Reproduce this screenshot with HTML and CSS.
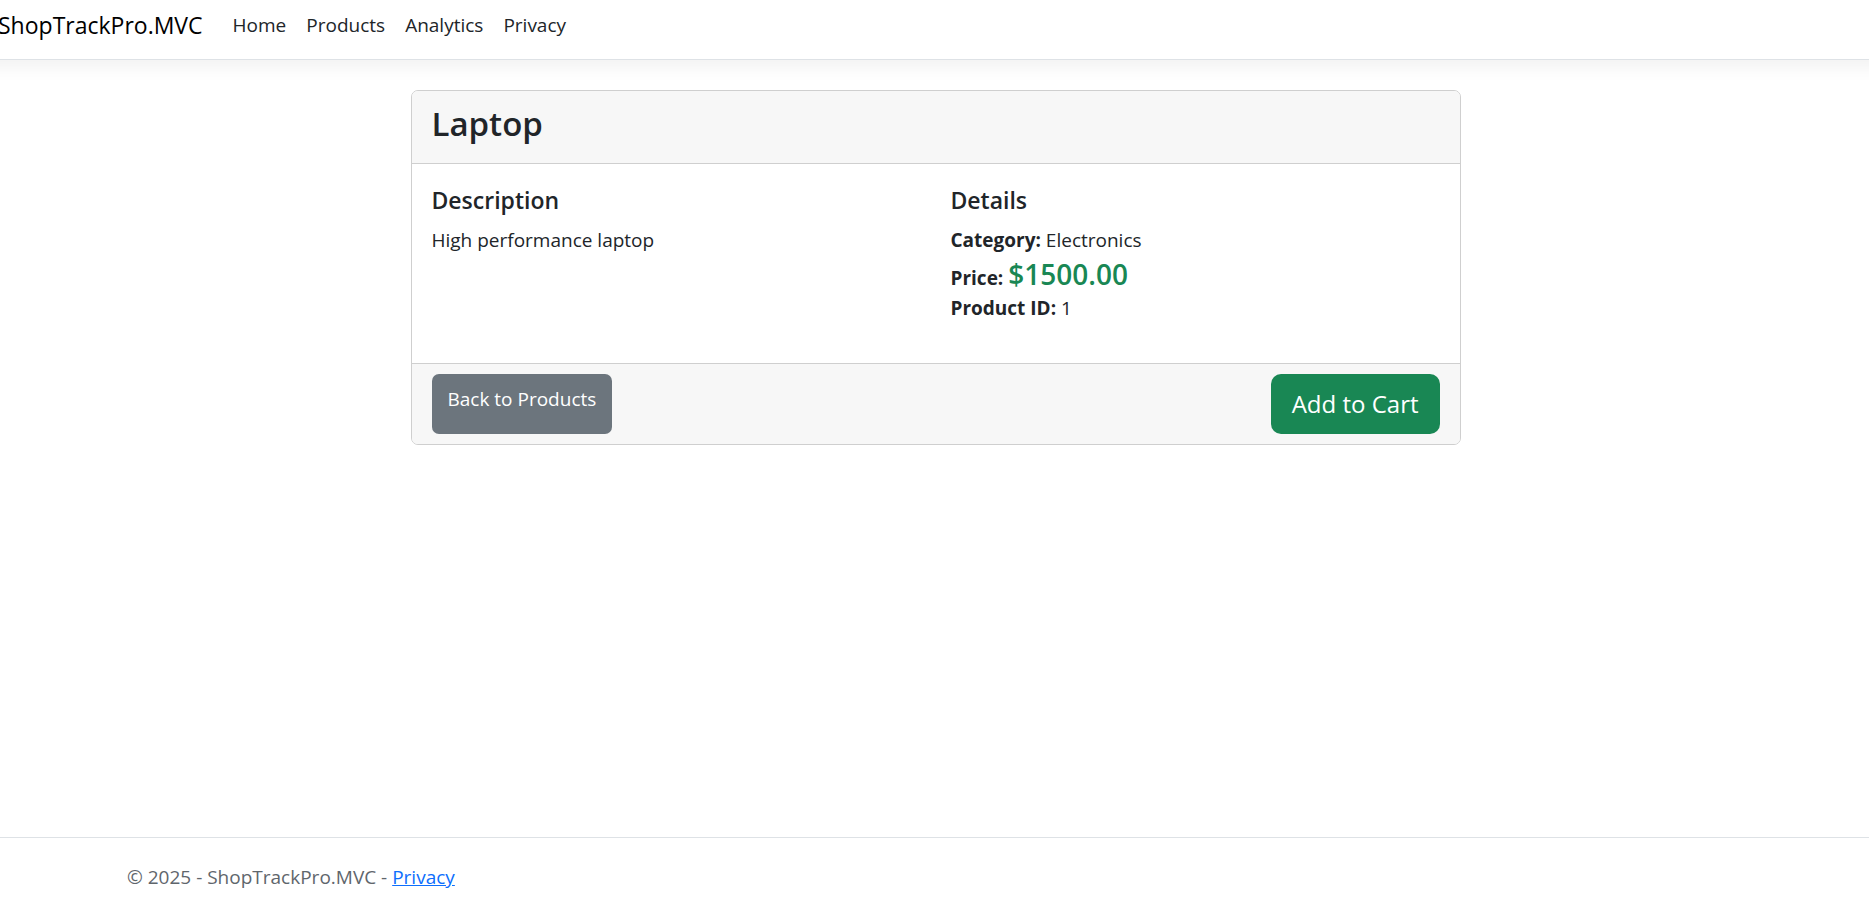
FILE: index.html
```
<!DOCTYPE html>
<html lang="en">
<head>
<meta charset="utf-8">
<meta name="viewport" content="width=device-width, initial-scale=1">
<title>Laptop - ShopTrackPro.MVC</title>
<link rel="stylesheet" href="styles.css">
</head>
<body>
<header class="site-header">
  <nav class="navbar">
    <a class="navbar-brand" href="#">ShopTrackPro.MVC</a>
    <ul class="nav-list">
      <li><a class="nav-link" href="#">Home</a></li>
      <li><a class="nav-link" href="#">Products</a></li>
      <li><a class="nav-link" href="#">Analytics</a></li>
      <li><a class="nav-link" href="#">Privacy</a></li>
    </ul>
  </nav>
</header>
<main class="content">
  <article class="card">
    <div class="card-header"><h2 class="card-title">Laptop</h2></div>
    <div class="card-body">
      <section>
        <h5 class="section-title">Description</h5>
        <p class="text">High performance laptop</p>
      </section>
      <section>
        <h5 class="section-title">Details</h5>
        <p class="text"><strong>Category:</strong> Electronics</p>
        <p class="text price-row"><strong>Price:</strong> <span class="price">$1500.00</span></p>
        <p class="text"><strong>Product ID:</strong> 1</p>
      </section>
    </div>
    <div class="card-footer">
      <a class="btn btn-secondary" href="#">Back to Products</a>
      <button class="btn btn-success" type="submit">Add to Cart</button>
    </div>
  </article>
</main>
<footer class="site-footer">
  <p class="copyright">&copy; 2025 - ShopTrackPro.MVC - <a class="footer-link" href="#">Privacy</a></p>
</footer>
</body>
</html>
```
FILE: styles.css
```
* {
  box-sizing: border-box;
}

body {
  margin: 0;
  min-height: 100vh;
  display: flex;
  flex-direction: column;
  overflow-x: hidden;
  background: #fff;
  color: #212529;
  font-family: "Segoe UI", "Open Sans", "Noto Sans", sans-serif;
  font-size: 19px;
  line-height: 30px;
}

.site-header {
  margin: 0 -20px;
  padding: 0 20px;
  border-bottom: 1px solid #dee2e6;
  box-shadow: 0 8px 16px rgba(0, 0, 0, 0.05);
}

.navbar {
  display: flex;
  align-items: center;
  gap: 30px;
  margin-left: -2px;
  padding: 6px 0 15px;
}

.navbar-brand {
  color: #000;
  font-size: 23px;
  line-height: 38px;
  text-decoration: none;
}

.nav-list {
  display: flex;
  gap: 20px;
  margin: 0;
  padding: 0;
  list-style: none;
}

.nav-link {
  color: #212529;
  text-decoration: none;
}

.content {
  flex: 1;
  padding: 30px 0 30px 2px;
}

.card {
  max-width: 1050px;
  margin: 0 auto;
  border: 1px solid #cfcfcf;
  border-radius: 7px;
  overflow: hidden;
}

.card-header {
  padding: 11px 20px 18px;
  background: #f7f7f7;
  border-bottom: 1px solid #cfcfcf;
}

.card-title {
  margin: 0;
  font-size: 33px;
  font-weight: 600;
  line-height: 43px;
}

.card-body {
  display: grid;
  grid-template-columns: 1fr 1fr;
  gap: 30px;
  padding: 21px 20px 40px;
}

.section-title {
  margin: 0 0 10px;
  font-size: 23px;
  font-weight: 600;
  line-height: 30px;
}

.text {
  margin: 0;
}

.price-row {
  padding-top: 4px;
}

.price {
  color: #198754;
  font-size: 28px;
  font-weight: 600;
  line-height: 30px;
}

.card-footer {
  display: flex;
  justify-content: space-between;
  padding: 10px 20px;
  background: #f7f7f7;
  border-top: 1px solid #cfcfcf;
}

.btn {
  border: 0;
  color: #fff;
  font-family: inherit;
  text-decoration: none;
  cursor: pointer;
}

.btn-secondary {
  padding: 10px 16px;
  border-radius: 7px;
  background: #6c757d;
}

.btn-success {
  padding: 11px 21px;
  border-radius: 10px;
  background: #198754;
  font-size: 24px;
  line-height: 38px;
}

.site-footer {
  padding: 24px 127px 16px;
  border-top: 1px solid #dee2e6;
  color: #5f666c;
}

.copyright {
  margin: 0;
}

.footer-link {
  color: #0d6efd;
}
```
